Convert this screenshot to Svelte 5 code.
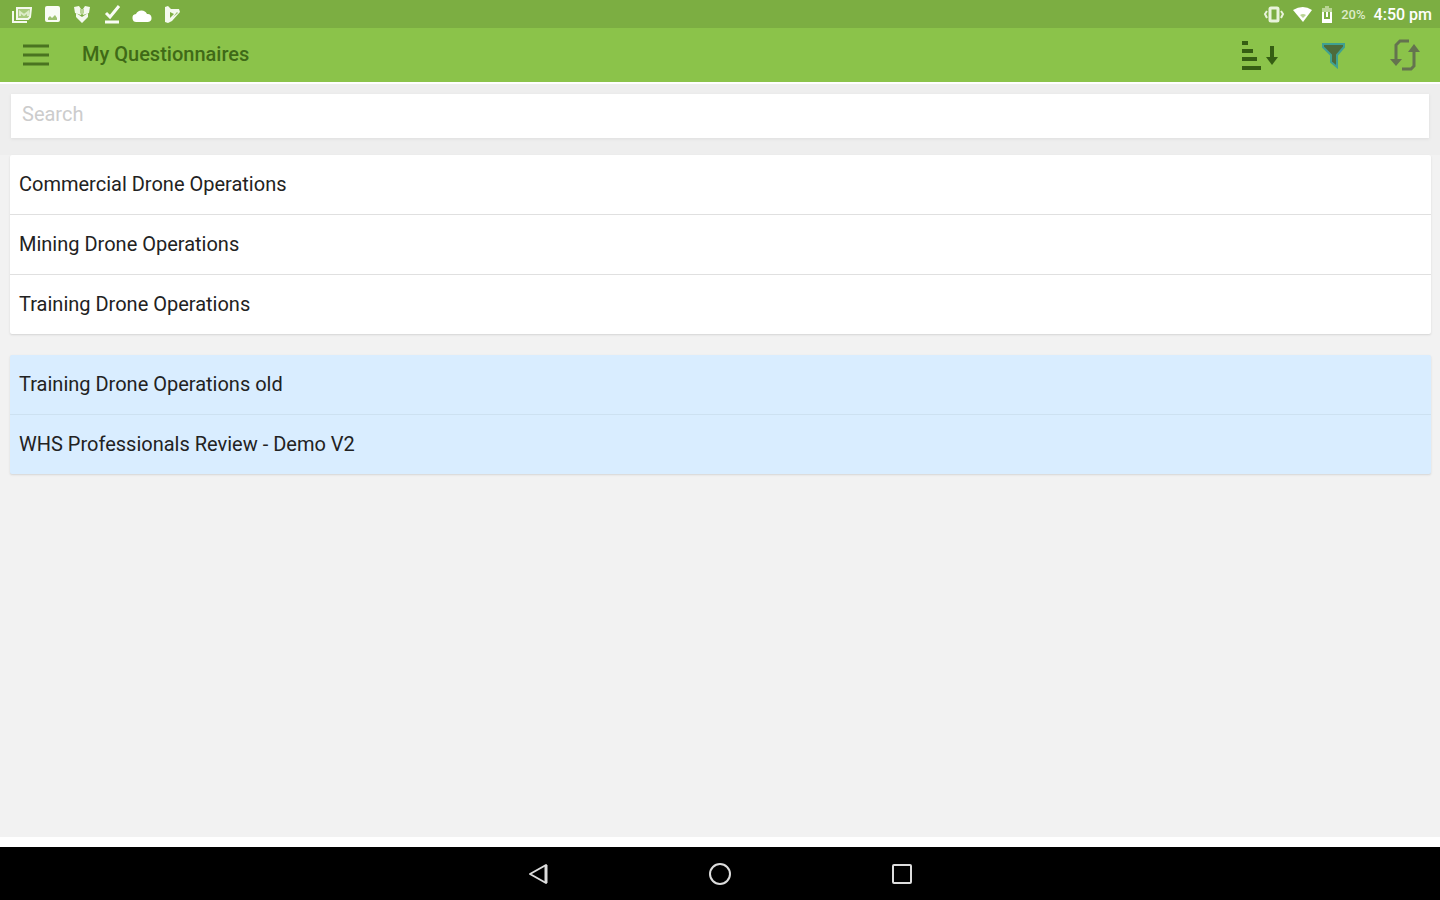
<script lang="ts">
	let search = $state('');

	const groups = [
		{
			name: 'current',
			items: ['Commercial Drone Operations', 'Mining Drone Operations', 'Training Drone Operations']
		},
		{
			name: 'archived',
			items: ['Training Drone Operations old', 'WHS Professionals Review - Demo V2']
		}
	];

	const matches = (item: string) => item.toLowerCase().includes(search.toLowerCase());
</script>

<div class="screen">
	<div class="statusBar">
		<div class="notifications">
			<svg width="20" height="20" viewBox="0 0 20 20" fill="none" stroke="#f4f9ee" stroke-width="2">
				<path d="M5 4h14l-1 9-2 2H5z" fill="#a9cb7e" />
				<path d="M1 7v11h14" />
				<path d="M8 12V8l4 3 4-3v4" stroke="#dcebc8" />
			</svg>
			<svg width="20" height="20" viewBox="0 0 20 20">
				<rect x="3" y="2" width="15" height="16" rx="2" fill="#f9fcf5" />
				<path d="M6 16v-2l2-2 2 2 3-3 2 3v2z" fill="#9cc16e" />
			</svg>
			<svg width="20" height="20" viewBox="0 0 20 20" fill="#f4f9ee">
				<path d="M2 3l5-1 2 3v6l-6-2zM18 3l-5-1-2 3v6l6-2z" />
				<path d="M4 9l6 4 6-4v4l-6 6-6-6z" />
				<path d="M8 5h4v4l-2 2-2-2z" fill="#b9d594" />
			</svg>
			<svg width="20" height="20" viewBox="0 0 20 20" fill="none" stroke="#f9fcf5" stroke-width="3">
				<path d="M4 9l4 4 9-11M3 18h14" />
			</svg>
			<svg width="20" height="20" viewBox="0 0 20 20" fill="#fff">
				<path d="M5 18a4 4 0 0 1-1-8 6 6 0 0 1 11 0 4 4 0 0 1 1 8z" />
			</svg>
			<svg width="20" height="20" viewBox="0 0 20 20">
				<path d="M3 3l3-1 3 3h8l1 3-8 9-4 2-3-1z" fill="#f4f9ee" />
				<path d="M8 8l4 2-4 4z" fill="#7cae42" />
				<path d="M11 13l4-5 1 1z" fill="#9cc16e" />
			</svg>
		</div>
		<div class="device">
			<svg width="22" height="20" viewBox="0 0 22 20" fill="none" stroke="#e9f3dc" stroke-width="3">
				<rect x="7" y="4" width="8" height="13" rx="1" />
				<path d="M4 7L2 10l2 4M18 7l2 3-2 4" stroke-width="2" />
			</svg>
			<svg width="20" height="20" viewBox="0 0 20 20" fill="#fff">
				<path d="M0 6q10-6 19 0l-9 12z" />
				<path d="M7 11q3-2 6 0l-3 3z" fill="#b9d594" />
			</svg>
			<svg width="12" height="20" viewBox="0 0 12 20">
				<path d="M4 2h4v2h3v5H1V4h3z" fill="#b9d594" />
				<path d="M1 8h10v11H1z" fill="#fff" />
				<path d="M4 8v6h4V8" fill="none" stroke="#7cae42" stroke-width="2" />
			</svg>
			<span class="percent">20%</span>
			<time>4:50 pm</time>
		</div>
	</div>

	<header class="toolbar">
		<button class="iconButton" aria-label="Menu">
			<svg width="28" height="24" viewBox="0 0 28 24" stroke="#4a7420" stroke-width="3">
				<path d="M1 3h26M1 12h26M1 21h26" />
			</svg>
		</button>
		<h1>My Questionnaires</h1>
		<div class="actions">
			<button class="iconButton" aria-label="Sort">
				<svg width="38" height="32" viewBox="0 0 38 32">
					<path d="M2 4h6M2 12h11M2 20h15M2 29h19" stroke="#355e13" stroke-width="4" />
					<path d="M32 7v14" stroke="#355e13" stroke-width="4" />
					<path d="M26 18h12l-6 8z" fill="#355e13" />
				</svg>
			</button>
			<button class="iconButton" aria-label="Filter">
				<svg width="26" height="28" viewBox="0 0 26 28">
					<path
						d="M2 3h21v3l-7 8v12l-6-5v-7L2 6z"
						fill="#4d6b3b"
						stroke="#3fa091"
						stroke-width="2"
					/>
					<path d="M5 5h15l-6 7v10l-3-2v-8z" fill="#4d6b3b" />
				</svg>
			</button>
			<button class="iconButton" aria-label="Refresh">
				<svg width="30" height="32" viewBox="0 0 30 32">
					<path
						d="M19 2h-9l-4 4v16M12 30h9l3-3V9"
						fill="none"
						stroke="#64734f"
						stroke-width="3"
					/>
					<path d="M0 20h12l-6 7zM18 13h12l-6-8z" fill="#64734f" />
				</svg>
			</button>
		</div>
	</header>

	<main>
		<div class="searchBar">
			<input type="text" placeholder="Search" aria-label="Search" bind:value={search} />
		</div>

		{#each groups as group}
			<ul class="list {group.name}">
				{#each group.items.filter(matches) as item}
					<li><a href="#questionnaire">{item}</a></li>
				{/each}
			</ul>
		{/each}
	</main>

	<nav aria-label="System">
		<button class="iconButton" aria-label="Back">
			<svg width="24" height="24" viewBox="0 0 24 24" fill="none" stroke="#ddd" stroke-width="2">
				<path d="M20 3v18L4 12z" stroke-linejoin="round" />
				<path d="M20 3v18" stroke-width="3" />
			</svg>
		</button>
		<button class="iconButton" aria-label="Home">
			<svg width="24" height="24" viewBox="0 0 24 24" fill="none" stroke="#ddd" stroke-width="2">
				<circle cx="12" cy="12" r="10" />
			</svg>
		</button>
		<button class="iconButton" aria-label="Recent apps">
			<svg width="24" height="24" viewBox="0 0 24 24" fill="none" stroke="#ddd" stroke-width="2">
				<rect x="3" y="3" width="18" height="18" rx="1" />
			</svg>
		</button>
	</nav>
</div>

<style>
	:global(body) {
		margin: 0;
		background: #fff;
	}

	.screen {
		display: flex;
		flex-direction: column;
		min-height: 100vh;
		font-family: Roboto, sans-serif;
		color: #222;
	}

	svg {
		display: block;
	}

	.statusBar {
		display: flex;
		align-items: center;
		justify-content: space-between;
		height: 28px;
		padding: 0 8px 0 12px;
		background: #7cae42;
		color: #fff;
	}

	.notifications {
		display: flex;
		gap: 10px;
	}

	.device {
		display: flex;
		align-items: center;
		gap: 8px;
		font-size: 16px;
		font-weight: 500;
	}

	.percent {
		font-size: 13px;
		color: #dcebc8;
	}

	.iconButton {
		padding: 0;
		border: 0;
		background: none;
		cursor: pointer;
	}

	.toolbar {
		display: flex;
		align-items: center;
		height: 54px;
		padding: 0 20px 0 22px;
		background: #8bc34a;
	}

	h1 {
		margin: 0 0 0 32px;
		padding-bottom: 2px;
		font-size: 20px;
		font-weight: 500;
		line-height: 28px;
		color: #3f6a17;
	}

	.actions {
		display: flex;
		align-items: center;
		gap: 43px;
		margin-left: auto;
	}

	main {
		flex: 1;
		margin: 2px 0 10px;
		background: #f2f2f2;
	}

	.searchBar {
		padding: 10px 11px 17px;
		background: #eee;
	}

	input {
		display: block;
		box-sizing: border-box;
		width: 100%;
		height: 44px;
		padding: 0 11px 4px;
		border: 0;
		background: #fff;
		box-shadow: 0 1px 3px #ddd;
		font: inherit;
		font-size: 20px;
	}

	input::placeholder {
		color: #ccc;
		opacity: 1;
	}

	.list {
		margin: 0 9px 21px 10px;
		padding: 0;
		list-style: none;
		background: #fff;
		border-radius: 2px;
		box-shadow: 0 1px 2px #d4d4d4;
	}

	li + li {
		border-top: 1px solid #e0e0e0;
	}

	.archived {
		background: #d9edff;
	}

	.archived li + li {
		border-color: #cde1f1;
	}

	a {
		display: block;
		padding: 15px 9px 16px;
		font-size: 20px;
		line-height: 28px;
		color: inherit;
		text-decoration: none;
	}

	nav {
		display: flex;
		align-items: center;
		justify-content: center;
		gap: 158px;
		height: 53px;
		background: #000;
	}
</style>
